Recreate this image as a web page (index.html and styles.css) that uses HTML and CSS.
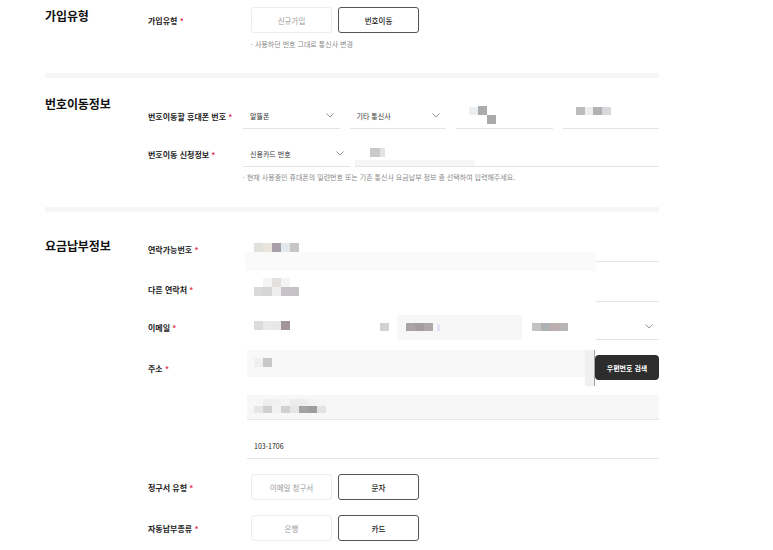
FILE: index.html
```html
<!DOCTYPE html>
<html lang="ko">
<head>
<meta charset="utf-8">
<title>가입정보</title>
<link rel="stylesheet" href="styles.css">
</head>
<body>
<div class="page">

  <section class="section s1">
    <h2 class="sec-title t1">가입유형</h2>
    <div class="fields">
      <div class="row h26">
        <div class="label">가입유형 <span class="req">*</span></div>
        <div class="btns">
          <button class="opt">신규가입</button>
          <button class="opt on">번호이동</button>
        </div>
      </div>
      <p class="help h1">· 사용하던 번호 그대로 통신사 변경</p>
    </div>
  </section>
  <div class="divider"></div>

  <section class="section s2">
    <h2 class="sec-title t2">번호이동정보</h2>
    <div class="fields f2">
      <div class="row h26">
        <div class="label">번호이동할 휴대폰 번호 <span class="req">*</span></div>
        <div class="grid4">
          <div class="select">알뜰폰<svg class="chev" viewBox="0 0 8 5"><path d="M0.5 0.5 L4 4 L7.5 0.5"/></svg></div>
          <div class="select">기타 통신사<svg class="chev" viewBox="0 0 8 5"><path d="M0.5 0.5 L4 4 L7.5 0.5"/></svg></div>
          <div class="input mz-a"><span class="m m1"></span><span class="m m2"></span><span class="m m3"></span></div>
          <div class="input mz-b"><span class="m n1"></span><span class="m n2"></span><span class="m n3"></span><span class="m n4"></span></div>
        </div>
      </div>
      <div class="row h26 mt12">
        <div class="label">번호이동 신청정보 <span class="req">*</span></div>
        <div class="grid2">
          <div class="select">신용카드 번호<svg class="chev" viewBox="0 0 8 5"><path d="M0.5 0.5 L4 4 L7.5 0.5"/></svg></div>
          <div class="input mz-c"><span class="m c1"></span><span class="m c2"></span><span class="cfill"></span></div>
        </div>
      </div>
      <p class="help h2">· 현재 사용중인 휴대폰의 일련번호 또는 기존 통신사 요금납부 정보 중 선택하여 입력해주세요.</p>
    </div>
  </section>
  <div class="divider"></div>

  <section class="section s3">
    <h2 class="sec-title t3">요금납부정보</h2>
    <div class="fields f3">
      <div class="row h26">
        <div class="label">연락가능번호 <span class="req">*</span></div>
        <div class="ctrl split">
          <div class="masked">
            <div class="mosaic r1">
              <span style="background:#e0e1dd"></span><span style="background:#e9e5dc"></span><span style="background:#a99fa8"></span><span style="background:#e3e8ea"></span><span style="background:#c9c4c6"></span>
            </div>
            <div class="fillband b1"></div>
          </div>
          <div class="line-part"></div>
        </div>
      </div>

      <div class="row h26 mt14">
        <div class="label">다른 연락처 <span class="req">*</span></div>
        <div class="ctrl split">
          <div class="masked">
            <div class="mosaic2">
              <div class="mrow"><span style="background:#fff"></span><span style="background:#f3f4f3"></span><span style="background:#e2e1df"></span><span style="background:#f4f4f4"></span><span style="background:#fff"></span></div>
              <div class="mrow"><span style="background:#d9d9d9"></span><span style="background:#d6d5d6"></span><span style="background:#eeeeee"></span><span style="background:#c6c3c6"></span><span style="background:#c4c2c4"></span></div>
            </div>
          </div>
          <div class="line-part"></div>
        </div>
      </div>

      <div class="row h26 mt12">
        <div class="label">이메일 <span class="req">*</span></div>
        <div class="ctrl email">
          <div class="em-id">
            <div class="mosaic r1"><span style="background:#dcdcdc"></span><span style="background:#e9e9e9"></span><span style="background:#e8e8e8"></span><span style="background:#a29599"></span></div>
            <span class="m at"></span>
          </div>
          <div class="em-domain">
            <div class="mosaic r1"><span style="background:#aaa4a5"></span><span style="background:#a49d9e"></span><span style="background:#ada7a8"></span></div>
            <span class="cursorish"></span>
          </div>
          <div class="em-select">
            <div class="mosaic r1"><span style="background:#c3c3c4"></span><span style="background:#aab0b3"></span><span style="background:#bcaeae"></span><span style="background:#b9b5b5"></span></div>
            <div class="sel-line"><svg class="chev" viewBox="0 0 8 5"><path d="M0.5 0.5 L4 4 L7.5 0.5"/></svg></div>
          </div>
        </div>
      </div>

      <div class="row addr mt10">
        <div class="label">주소 <span class="req">*</span></div>
        <div class="ctrl addr-ctrl">
          <div class="addr-input">
            <div class="mosaic r1"><span style="background:#f0f0f0"></span><span style="background:#c8c8c8"></span></div>
            <div class="edge"></div>
          </div>
          <button class="zip">우편번호 검색</button>
        </div>
      </div>

      <div class="row addr2 mt9">
        <div class="label"></div>
        <div class="ctrl addr2-input">
          <div class="mosaic2 small">
            <div class="mrow"><span style="background:#f7f7f7"></span><span style="background:#eeeeee"></span><span style="background:#f0f0f0"></span><span style="background:#f4f4f4"></span><span style="background:#ececec"></span><span style="background:#ededed"></span><span style="background:#f3f3f3"></span><span style="background:#f5f5f5"></span></div>
            <div class="mrow"><span style="background:#e6e6e6"></span><span style="background:#d0d0d0"></span><span style="background:#f2f2f2"></span><span style="background:#d1d1d1"></span><span style="background:#e6e6e6"></span><span style="background:#a4a2a4"></span><span style="background:#9e9c9e"></span><span style="background:#e3e3e3"></span></div>
          </div>
        </div>
      </div>

      <div class="row h26 mt13">
        <div class="label"></div>
        <div class="ctrl text-input">103-1706</div>
      </div>

      <div class="row h26 mt15">
        <div class="label">청구서 유형 <span class="req">*</span></div>
        <div class="btns">
          <button class="opt">이메일 청구서</button>
          <button class="opt on">문자</button>
        </div>
      </div>

      <div class="row h26 mt15">
        <div class="label">자동납부종류 <span class="req">*</span></div>
        <div class="btns">
          <button class="opt">은행</button>
          <button class="opt on">카드</button>
        </div>
      </div>
    </div>
  </section>
</div>
</body>
</html>
```

FILE: styles.css
```css
* { box-sizing: border-box; }
html, body { margin: 0; padding: 0; background: #fff; }
body {
  font-family: "Noto Sans CJK KR", "Noto Sans", sans-serif;
  color: #222;
}
.page { padding-left: 45px; width: 659px; }

.section { display: flex; align-items: flex-start; }
.sec-title {
  width: 103px; margin: 0; flex: none;
  font-size: 12px; line-height: 16px; font-weight: 700; color: #111;
  letter-spacing: -0.1px;
}
.fields { flex: 1; display: flex; flex-direction: column; }

.s1 { padding-top: 7px; padding-bottom: 25px; }
.t1 { margin-top: 1px; }
.s2 { padding-top: 18px; padding-bottom: 26px; }
.f2 { padding-top: 7px; }
.s3 { padding-top: 26px; }
.f3 { margin-top: -2px; }

.divider { height: 5px; background: #f6f6f6; width: 614px; }

.row { display: flex; align-items: center; }
.h26 { height: 26px; }
.mt9 { margin-top: 9px; }
.mt10 { margin-top: 10px; }
.mt12 { margin-top: 12px; }
.mt13 { margin-top: 13px; }
.mt14 { margin-top: 14px; }
.mt15 { margin-top: 15px; }

.label {
  width: 95px; flex: none;
  font-size: 8px; font-weight: 700; color: #222; white-space: nowrap;
}
.req { color: #e4355a; }

.btns { display: flex; gap: 6px; margin-left: 8px; height: 100%; }
.opt {
  width: 81px; height: 26px; padding: 0;
  font-family: inherit; font-size: 7.5px; color: #9a9a9a;
  background: #fff; border: 1px solid #ececec; border-radius: 3px;
}
.opt.on { border-color: #555; color: #222; font-weight: 500; }

.help { margin: 0; padding-left: 103px; font-size: 7px; line-height: 8px; color: #8a8a8a; }
.h1 { margin-top: 7px; }
.h2 { margin-top: 6px; padding-left: 95px; }

.grid4 { flex: 1; display: grid; grid-template-columns: repeat(4, 1fr); column-gap: 10px; height: 100%; }
.grid2 { flex: 1; display: grid; grid-template-columns: 107px 1fr; column-gap: 5px; height: 100%; }

.select {
  position: relative; height: 100%;
  display: flex; align-items: center; justify-content: space-between;
  padding: 0 6px 0 7px;
  font-size: 7px; color: #333;
  border-bottom: 1px solid #e4e4e4;
}
.chev { width: 8px; height: 5px; fill: none; stroke: #888; stroke-width: 0.9; }

.input { position: relative; height: 100%; border-bottom: 1px solid #e4e4e4; }
.m { position: absolute; display: block; }
.m1 { left: 13px; top: 4px; width: 9px; height: 8px; background: #eceff1; }
.m2 { left: 22px; top: 3px; width: 9px; height: 9px; background: #ababab; }
.m3 { left: 31px; top: 12px; width: 9px; height: 9px; background: #aaaaaa; }
.n1 { left: 13px; top: 4px; width: 9px; height: 8px; background: #bdbdbd; }
.n2 { left: 22px; top: 4px; width: 8px; height: 8px; background: #eceeee; }
.n3 { left: 30px; top: 4px; width: 9px; height: 8px; background: #b2b2b2; }
.n4 { left: 39px; top: 4px; width: 9px; height: 8px; background: #d7d7dc; }
.c1 { left: 15px; top: 7px; width: 10px; height: 9px; background: #c9c9c9; }
.c2 { left: 25px; top: 7px; width: 5px; height: 9px; background: #e3e3e3; }
.cfill { position: absolute; left: 0; bottom: 0; width: 120px; height: 6px; background: #f6f6f6; }

.ctrl { flex: 1; margin-left: 4px; height: 100%; }

.split { display: flex; }
.masked { position: relative; width: 349px; height: 100%; }
.line-part { flex: 1; height: 100%; border-bottom: 1px solid #e4e4e4; }

.mosaic { display: flex; position: absolute; }
.mosaic span { display: block; width: 9px; height: 9px; }
.r1 { left: 7px; top: 7px; }
.fillband { position: absolute; left: -2px; right: 0; top: 16px; height: 19px; background: #fafafa; }

.mosaic2 { position: absolute; left: 7px; top: 2px; display: flex; flex-direction: column; }
.mrow { display: flex; }
.mrow span { display: block; width: 9px; height: 9px; }

.email { display: flex; position: relative; }
.em-id { position: relative; width: 150px; height: 100%; }
.at { left: 133px; top: 9px; width: 9px; height: 8px; background: #d2d2d2; }
.em-domain { position: relative; width: 125px; height: 25px; margin-top: 1px; background: #f7f7f7; }
.em-domain .r1 { left: 9px; top: 8px; }
.em-domain .r1 span { height: 8px; }
.cursorish { position: absolute; left: 40px; top: 9px; width: 3px; height: 7px; background: #e6e2f4; }
.em-select { position: relative; flex: 1; margin-left: 8px; height: 100%; }
.em-select .r1 { left: 2px; top: 9px; }
.em-select .r1 span { height: 8px; }
.sel-line {
  position: absolute; right: 0; bottom: 0; width: 63px; height: 100%;
  border-bottom: 1px solid #e4e4e4;
  display: flex; align-items: center; justify-content: flex-end; padding-right: 6px;
}

.addr { height: 36px; align-items: center; }
.addr-ctrl { display: flex; align-items: flex-start; }
.addr-input { position: relative; width: 348px; height: 27px; background: #f8f8f8; }
.addr-input .r1 { left: 7px; top: 8px; }
.edge { position: absolute; right: 0; top: 0; width: 10px; height: 36px; background: #f0f0f0; border-right: 1px solid #a5a5a5; }
.zip {
  margin-top: 5px; width: 64px; height: 25px; padding: 0;
  font-family: inherit; font-size: 7px; font-weight: 700; color: #fff;
  background: #2d2d2d; border: none; border-radius: 4px;
}

.addr2 { height: 25px; }
.addr2-input { position: relative; background: #f7f7f7; border-bottom: 1px solid #e6e6e6; }
.addr2-input .mosaic2 { left: 7px; top: 4px; }
.small .mrow span { width: 9px; height: 7px; }

.text-input {
  display: flex; align-items: center; padding-left: 7px;
  font-size: 7px; color: #222; border-bottom: 1px solid #e4e4e4;
}
```
